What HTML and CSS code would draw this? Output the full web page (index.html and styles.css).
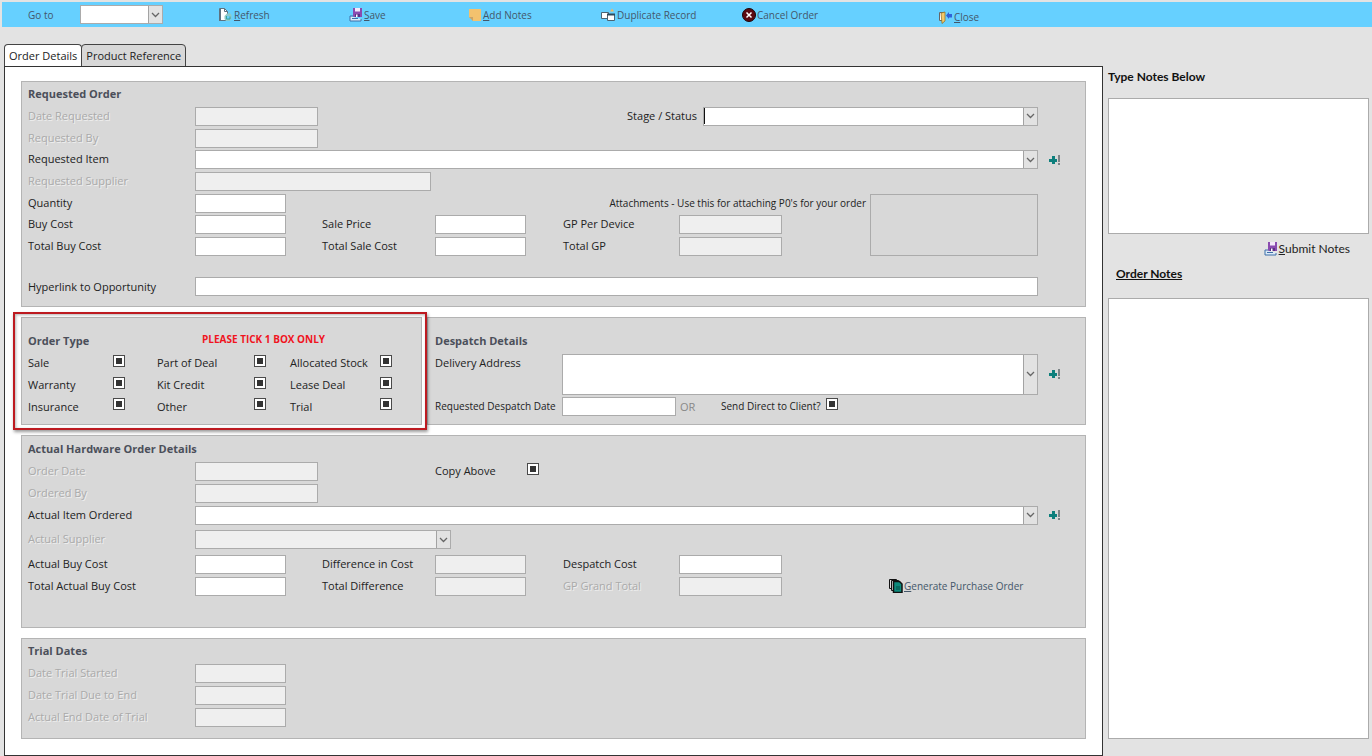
FILE: index.html
```
<!DOCTYPE html>
<html lang="en">
<head>
    <meta charset="UTF-8">
    <meta name="viewport" content="width=device-width, initial-scale=1.0">
    <title>Order Details</title>
    <link rel="stylesheet" href="styles.css">
</head>
<body>
    <!-- Shared icons -->
    <svg class="icon-defs" aria-hidden="true">
        <symbol id="icon-save" viewBox="0 0 14 14">
            <path d="M1 8v5h11v-2" fill="#dceaf8" stroke="#3c6fa8"/>
            <path d="M1 8h4" stroke="#3c6fa8"/>
            <path d="M3 10.500h6" stroke="#3c6fa8"/>
            <path d="M4 0h9v9H5L4 8z" fill="#8a4bb0"/>
            <path d="M6 0h5v3.500H6z" fill="#f3e8fa"/>
            <path d="M6 6h5v3H6z" fill="#5d2f86"/>
            <path d="M7 6.500h1.500V9H7z" fill="#fff"/>
        </symbol>
        <symbol id="icon-add" viewBox="0 0 12 12">
            <path d="M3 2h3v3h2v3H6v2H3V8H0V5h3z" fill="#0d7f7c"/>
            <path d="M9 1h2v7H9zM9 9h2v2H9z" fill="#7d8487"/>
        </symbol>
    </svg>

    <header class="toolbar">
        <label for="goTo">Go to</label>
        <select id="goTo" class="combo goto"><option></option></select>
        <button type="button" class="tool">
            <svg width="15" height="14" viewBox="0 0 15 14"><path d="M1.500.500h5l3 3v9h-8z" fill="#fff" stroke="#5e7280"/><path d="M6.500.500v3h3" fill="none" stroke="#5e7280"/><path d="M1 1h2v12H1z" fill="#5e7280"/><path d="M9 5.500h2V4l2.500 3v3.500L12 13H8l-1.500-2V8z" fill="#8cc9c9"/><path d="M8.500 8v3h3.500V8.500" fill="#66d0ff" stroke="#3ba39b"/></svg>
            <span><u>R</u>efresh</span>
        </button>
        <button type="button" class="tool">
            <svg width="14" height="14"><use href="#icon-save"/></svg>
            <span><u>S</u>ave</span>
        </button>
        <button type="button" class="tool">
            <svg width="14" height="14" viewBox="0 0 14 14"><path d="M1 1h12v12H5L1 9z" fill="#f3c26e"/><path d="M1 9h4v4z" fill="#c9a469"/></svg>
            <span><u>A</u>dd Notes</span>
        </button>
        <button type="button" class="tool">
            <svg width="15" height="14" viewBox="0 0 15 14"><path d="M9 3.500l2-3 2 3z" fill="#efb765"/><path d="M.500 4.500h7v6h-7z" fill="#fff" stroke="#4c6473"/><path d="M6.500 6.500h7v6h-7z" fill="#fff" stroke="#4c6473"/><path d="M6 6.500h8" stroke="#2f4b5c" stroke-width="2"/></svg>
            <span>Duplicate Record</span>
        </button>
        <button type="button" class="tool">
            <svg width="14" height="14" viewBox="0 0 14 14"><circle cx="7" cy="7" r="6.500" fill="#5c0a12" stroke="#1c0508"/><path d="M4.500 4.500l5 5m0-5l-5 5" stroke="#fff" stroke-width="1.500"/></svg>
            <span>Cancel Order</span>
        </button>
        <button type="button" class="tool tool-close">
            <svg width="15" height="14" viewBox="0 0 15 14"><path d="M1.500 2.500h5v8h-5z" fill="#fff" stroke="#666"/><path d="M3 3l4-1v9l-3 2.500z" fill="#f4c96a" stroke="#8a6a1c" stroke-width=".7"/><path d="M8 5.500l3-3.500v2h3v3.500h-3V9z" fill="#2f62d9"/></svg>
            <span><u>C</u>lose</span>
        </button>
    </header>

    <div class="layout">
        <main class="main">
            <div class="tabs" role="tablist">
                <button type="button" role="tab" class="tab active" aria-selected="true">Order Details</button>
                <button type="button" role="tab" class="tab" aria-selected="false">Product Reference</button>
            </div>

            <form class="tab-page">
                <section class="panel">
                    <h2>Requested Order</h2>
                    <div class="fields requested-fields">
                        <label for="dateRequested" class="off">Date Requested</label>
                        <input type="text" id="dateRequested" class="w-date" disabled>
                        <div class="stage">
                            <label for="stage">Stage / Status</label>
                            <span class="caret-wrap"><select id="stage" class="combo"><option></option></select></span>
                        </div>

                        <label for="requestedBy" class="off c1">Requested By</label>
                        <input type="text" id="requestedBy" class="w-date" disabled>

                        <label for="requestedItem" class="c1">Requested Item</label>
                        <select id="requestedItem" class="combo to-end"><option></option></select>
                        <button type="button" class="add" aria-label="Add item"><svg width="12" height="12"><use href="#icon-add"/></svg></button>

                        <label for="requestedSupplier" class="off c1">Requested Supplier</label>
                        <input type="text" id="requestedSupplier" class="w-supplier" disabled>

                        <label for="quantity" class="c1">Quantity</label>
                        <input type="text" id="quantity" class="w-cost">
                        <label for="attachments" class="small attach-label">Attachments - Use this for attaching P0's for your order</label>
                        <output id="attachments" class="attachments"></output>

                        <label for="buyCost" class="c1">Buy Cost</label>
                        <input type="text" id="buyCost" class="w-cost">
                        <label for="salePrice">Sale Price</label>
                        <input type="text" id="salePrice" class="w-cost">
                        <label for="gpDevice">GP Per Device</label>
                        <input type="text" id="gpDevice" class="w-gp" disabled>

                        <label for="totalBuyCost" class="c1">Total Buy Cost</label>
                        <input type="text" id="totalBuyCost" class="w-cost">
                        <label for="totalSaleCost">Total Sale Cost</label>
                        <input type="text" id="totalSaleCost" class="w-cost">
                        <label for="totalGp">Total GP</label>
                        <input type="text" id="totalGp" class="w-gp" disabled>

                        <label for="hyperlink" class="c1 link-row">Hyperlink to Opportunity</label>
                        <input type="text" id="hyperlink" class="to-end link-row">
                    </div>
                </section>

                <div class="panel-row">
                    <section class="panel order-type">
                        <div class="type-head">
                            <h2>Order Type</h2>
                            <p class="warning">PLEASE TICK 1 BOX ONLY</p>
                        </div>
                        <div class="type-grid">
                            <label for="tSale">Sale</label><input type="checkbox" id="tSale" checked>
                            <label for="tPart">Part of Deal</label><input type="checkbox" id="tPart" checked>
                            <label for="tStock">Allocated Stock</label><input type="checkbox" id="tStock" checked>
                            <label for="tWarranty">Warranty</label><input type="checkbox" id="tWarranty" checked>
                            <label for="tKit">Kit Credit</label><input type="checkbox" id="tKit" checked>
                            <label for="tLease">Lease Deal</label><input type="checkbox" id="tLease" checked>
                            <label for="tInsurance">Insurance</label><input type="checkbox" id="tInsurance" checked>
                            <label for="tOther">Other</label><input type="checkbox" id="tOther" checked>
                            <label for="tTrial">Trial</label><input type="checkbox" id="tTrial" checked>
                        </div>
                    </section>

                    <section class="panel despatch">
                        <h2>Despatch Details</h2>
                        <div class="despatch-grid">
                            <label for="address">Delivery Address</label>
                            <select id="address" class="combo address"><option></option></select>
                            <button type="button" class="add address-add" aria-label="Add address"><svg width="12" height="12"><use href="#icon-add"/></svg></button>
                            <label for="despatchDate" class="small despatch-label">Requested Despatch Date</label>
                            <div class="date-row">
                                <input type="text" id="despatchDate">
                                <span class="or">OR</span>
                                <label for="sendDirect" class="small">Send Direct to Client?</label>
                                <input type="checkbox" id="sendDirect" checked>
                            </div>
                        </div>
                    </section>
                </div>

                <section class="panel actual">
                    <h2>Actual Hardware Order Details</h2>
                    <div class="fields actual-fields">
                        <label for="orderDate" class="off">Order Date</label>
                        <input type="text" id="orderDate" class="w-date" disabled>
                        <div class="copy">
                            <label for="copyAbove">Copy Above</label>
                            <input type="checkbox" id="copyAbove" checked>
                        </div>

                        <label for="orderedBy" class="off c1">Ordered By</label>
                        <input type="text" id="orderedBy" class="w-date" disabled>

                        <label for="actualItem" class="c1">Actual Item Ordered</label>
                        <select id="actualItem" class="combo to-end"><option></option></select>
                        <button type="button" class="add" aria-label="Add item"><svg width="12" height="12"><use href="#icon-add"/></svg></button>

                        <label for="actualSupplier" class="off c1">Actual Supplier</label>
                        <select id="actualSupplier" class="combo w-supplier" disabled><option></option></select>

                        <label for="actualBuyCost" class="c1">Actual Buy Cost</label>
                        <input type="text" id="actualBuyCost" class="w-cost">
                        <label for="difference">Difference in Cost</label>
                        <input type="text" id="difference" class="w-cost" disabled>
                        <label for="despatchCost">Despatch Cost</label>
                        <input type="text" id="despatchCost" class="w-gp">

                        <label for="totalActual" class="c1">Total Actual Buy Cost</label>
                        <input type="text" id="totalActual" class="w-cost">
                        <label for="totalDifference">Total Difference</label>
                        <input type="text" id="totalDifference" class="w-cost" disabled>
                        <label for="gpGrand" class="off">GP Grand Total</label>
                        <input type="text" id="gpGrand" class="w-gp" disabled>
                        <button type="button" class="tool generate">
                            <svg width="14" height="14" viewBox="0 0 14 14"><path d="M.500.500h7v9h-7z" fill="#ddd" stroke="#111"/><path d="M2.500 1.500h7v10h-7z" fill="#ddd" stroke="#111"/><path d="M4.500 2.500h6l2.500 2.500v8.500H4.500z" fill="#0d8a7c" stroke="#111" stroke-width="1.500"/><path d="M7 8h4M7 10h4" stroke="#074a44"/></svg>
                            <span><u>G</u>enerate Purchase Order</span>
                        </button>
                    </div>
                </section>

                <section class="panel trial">
                    <h2>Trial Dates</h2>
                    <div class="fields">
                        <label for="trialStart" class="off c1">Date Trial Started</label>
                        <input type="text" id="trialStart" class="w-cost" disabled>
                        <label for="trialDue" class="off c1">Date Trial Due to End</label>
                        <input type="text" id="trialDue" class="w-cost" disabled>
                        <label for="trialEnd" class="off c1">Actual End Date of Trial</label>
                        <input type="text" id="trialEnd" class="w-cost" disabled>
                    </div>
                </section>
            </form>
        </main>

        <aside class="notes">
            <label for="newNote" class="notes-title">Type Notes Below</label>
            <textarea id="newNote" class="new-note"></textarea>
            <button type="button" class="tool submit">
                <svg width="14" height="14"><use href="#icon-save"/></svg>
                <span><u>S</u>ubmit Notes</span>
            </button>
            <label for="orderNotes" class="notes-title order-notes-title">Order Notes</label>
            <textarea id="orderNotes" class="order-notes"></textarea>
        </aside>
    </div>
</body>
</html>
```
FILE: styles.css
```
* {
    box-sizing: border-box;
}
body {
    margin: 0;
    min-height: 100vh;
    display: flex;
    flex-direction: column;
    background: #e3e3e3;
    color: #222;
    font-family: "Open Sans", "Noto Sans", sans-serif;
    font-size: 11px;
    line-height: 16px;
}
h2, p {
    margin: 0;
}
label {
    white-space: nowrap;
}
.icon-defs {
    display: none;
}

/* Form controls */
input, select, textarea, button {
    font: inherit;
    color: inherit;
    margin: 0;
}
input[type="text"], .combo, textarea {
    height: 19px;
    min-width: 0;
    padding: 0 4px;
    border: 1px solid #ababab;
    border-radius: 0;
    background-color: #fff;
    outline: none;
}
input[type="text"]:disabled, .combo:disabled {
    background-color: #efefef;
    opacity: 1;
}
.combo {
    appearance: none;
    background-image:
        url("data:image/svg+xml,%3Csvg xmlns='http://www.w3.org/2000/svg' width='9' height='6'%3E%3Cpath d='M1 1l3.500 3.500L8 1' fill='none' stroke='%23666' stroke-width='1.300'/%3E%3C/svg%3E"),
        linear-gradient(#e2e2e2, #e2e2e2),
        linear-gradient(#a3a3a3, #a3a3a3);
    background-repeat: no-repeat;
    background-position: right 2px center, right center, right center;
    background-size: 9px 6px, 13px 100%, 14px 100%;
}
input[type="checkbox"] {
    appearance: none;
    flex: none;
    width: 12px;
    height: 12px;
    border: 1px solid #4a4a4a;
    background: #fff;
}
input[type="checkbox"]:checked {
    background: linear-gradient(#333, #333) center / 6px 6px no-repeat #fff;
}
button {
    padding: 0;
    border: none;
    background: none;
    cursor: pointer;
}
.tool {
    display: flex;
    align-items: center;
    justify-self: start;
    gap: 1px;
    font-size: 10px;
    color: #44576a;
    white-space: nowrap;
}
.add {
    display: flex;
    align-items: center;
    justify-content: flex-end;
    padding-right: 1px;
}

/* Toolbar */
.toolbar {
    display: grid;
    grid-template-columns: 52px 138px 131px 119px 133px 141px 196px 1fr;
    align-items: center;
    height: 25px;
    margin: 2px 0 17px 2px;
    padding-left: 26px;
    background: #66d0ff;
    font-size: 10px;
    color: #44576a;
}
.goto {
    width: 83px;
}
.tool-close {
    padding-top: 4px;
}

.layout {
    flex: 1;
    display: flex;
    gap: 5px;
    padding: 0 3px 0 4px;
}
.main {
    flex: 1;
    min-width: 0;
    display: flex;
    flex-direction: column;
}

/* Tabs */
.tabs {
    display: flex;
    margin-bottom: -1px;
}
.tab {
    height: 23px;
    padding: 0 4px;
    border: 1px solid #444;
    border-radius: 4px 4px 0 0;
    background: #d8d8d8;
    color: #222;
}
.tab + .tab {
    margin-left: -1px;
}
.tab.active {
    border-bottom-color: #fff;
    background: #fff;
}
.tab-page {
    flex: 1;
    display: flex;
    flex-direction: column;
    gap: 10px;
    padding: 14px 16px;
    border: 1px solid #333;
    background: #fff;
}

/* Panels */
.panel {
    padding: 1px 23px 10px 6px;
    border: 1px solid #b4b4b4;
    background: #d8d8d8;
}
.panel h2 {
    height: 22px;
    font-size: 11px;
    line-height: 22px;
    color: #4b4f5a;
}
.fields {
    display: grid;
    grid-template-columns: 167px 127px 113px 128px 116px 1fr 168px 24px;
    grid-auto-rows: 22px;
    align-items: center;
}
.fields label {
    padding-bottom: 1px;
}
.requested-fields {
    grid-template-rows: 22px 22px 21px 22px 22px 21px 22px 39px;
}
.actual-fields {
    grid-template-rows: 22px 22px 22px 27px 22px 22px;
}
.c1 {
    grid-column: 1;
}
.off {
    color: #aaa;
    text-shadow: 1px 1px 0 #efefef;
}
.small {
    font-size: 10px;
}
.w-date {
    width: 123px;
}
.w-cost {
    width: 91px;
}
.w-gp {
    width: 103px;
}
.w-supplier {
    grid-column: 2 / 5;
    width: 236px;
}
select.w-supplier {
    width: 256px;
}
.to-end {
    grid-column: 2 / 8;
}
.link-row {
    align-self: end;
}
.stage {
    grid-column: 5 / 8;
    display: flex;
    align-items: center;
    gap: 6px;
}
.stage label {
    width: 134px;
    text-align: right;
}
.caret-wrap {
    position: relative;
    flex: 1;
    display: flex;
}
.caret-wrap .combo {
    width: 100%;
}
.caret-wrap::before {
    content: "";
    position: absolute;
    top: 1px;
    left: 1px;
    width: 1px;
    height: 16px;
    background: #111;
}
.attach-label {
    grid-column: 3 / 7;
    justify-self: end;
    padding-right: 4px;
}
.attachments {
    grid-column: 7;
    grid-row: 5 / 8;
    height: 62px;
    border: 1px solid #ababab;
}

/* Order type and despatch */
.panel-row {
    display: flex;
    gap: 5px;
}
.order-type {
    position: relative;
    flex: 0 0 401px;
}
.order-type::after {
    content: "";
    position: absolute;
    inset: -6px -6px -6px -9px;
    border: 2px solid #bd1a20;
    box-shadow: 1px 2px 3px rgba(0, 0, 0, 0.4), inset 1px 1px 3px rgba(0, 0, 0, 0.3);
    pointer-events: none;
}
.order-type, .despatch {
    padding-top: 12px;
    padding-bottom: 7px;
}
.despatch {
    flex: 1;
    padding-left: 7px;
}
.type-head {
    display: grid;
    grid-template-columns: 174px 1fr;
}
.warning {
    font-size: 10px;
    line-height: 18px;
    font-weight: bold;
    color: #f0141e;
}
.type-grid {
    display: grid;
    grid-template-columns: 85px 44px 97px 36px 90px 12px;
    grid-template-rows: 22px 22px 21px;
    align-items: center;
}
.type-grid input {
    margin-bottom: 5px;
}
.despatch-grid {
    display: grid;
    grid-template-columns: 127px 1fr 24px;
    grid-template-rows: 22px 22px 21px;
    align-items: center;
}
.combo.address {
    grid-row: 1 / 3;
    grid-column: 2;
    height: 41px;
}
.address-add {
    grid-row: 1 / 3;
    grid-column: 3;
}
.despatch-label {
    grid-row: 3;
    grid-column: 1;
    padding-bottom: 2px;
}
.date-row {
    grid-row: 3;
    grid-column: 2;
    display: flex;
    align-items: center;
}
.date-row input[type="text"] {
    width: 114px;
}
.or {
    width: 45px;
    padding-left: 4px;
    color: #888;
}
.date-row .small {
    margin-right: 5px;
    padding-bottom: 2px;
}
.date-row input[type="checkbox"] {
    margin-bottom: 5px;
}

/* Actual order */
.actual {
    padding-top: 2px;
    padding-bottom: 30px;
}
.copy {
    grid-column: 4 / 6;
    display: flex;
    align-items: center;
    gap: 31px;
}
.copy input {
    margin-bottom: 5px;
}
.generate {
    grid-column: 7 / 9;
    padding-left: 19px;
}

/* Notes */
.notes {
    flex: 0 0 261px;
    display: flex;
    flex-direction: column;
    padding: 25px 0 17px;
    font-family: Lato, sans-serif;
}
.notes-title {
    font-size: 12px;
    font-weight: bold;
    color: #111;
}
textarea {
    resize: none;
}
.notes .new-note {
    height: 136px;
    margin-top: 13px;
}
.submit {
    align-self: flex-end;
    margin: 7px 19px 9px 0;
    font-size: 12px;
    color: #222;
}
.order-notes-title {
    padding-left: 8px;
    text-decoration: underline;
}
.notes .order-notes {
    flex: 1;
    margin-top: 16px;
}
```
